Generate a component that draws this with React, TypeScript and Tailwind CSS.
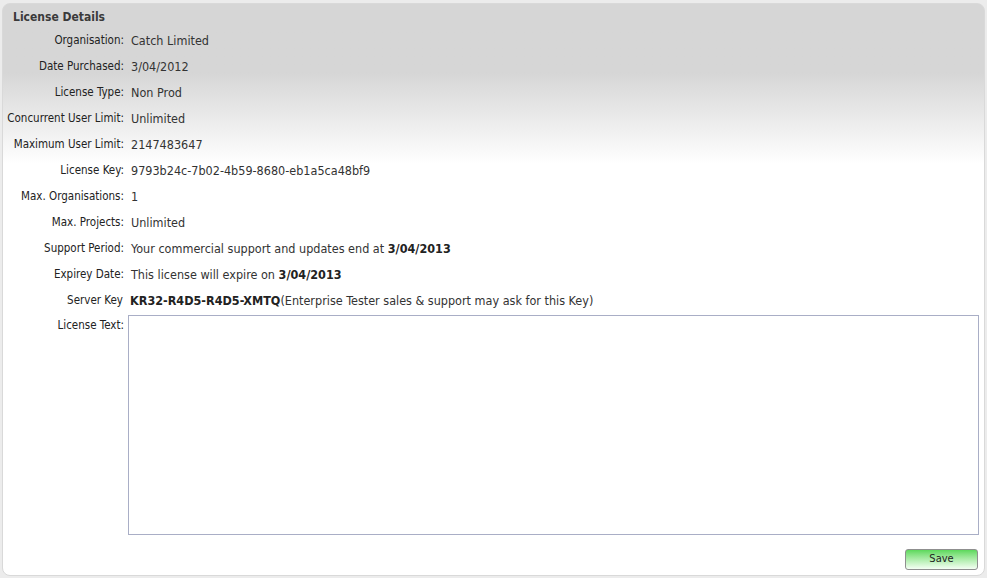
const rows: { label: string; value: React.ReactNode }[] = [
  { label: 'Organisation:', value: 'Catch Limited' },
  { label: 'Date Purchased:', value: '3/04/2012' },
  { label: 'License Type:', value: 'Non Prod' },
  { label: 'Concurrent User Limit:', value: 'Unlimited' },
  { label: 'Maximum User Limit:', value: '2147483647' },
  { label: 'License Key:', value: '9793b24c-7b02-4b59-8680-eb1a5ca48bf9' },
  { label: 'Max. Organisations:', value: '1' },
  { label: 'Max. Projects:', value: 'Unlimited' },
  {
    label: 'Support Period:',
    value: (
      <>
        Your commercial support and updates end at <b className="text-[#222]">3/04/2013</b>
      </>
    ),
  },
  {
    label: 'Expirey Date:',
    value: (
      <>
        This license will expire on <b className="text-[#222]">3/04/2013</b>
      </>
    ),
  },
];

export default function App() {
  return (
    <div
      className="w-[987px] h-[578px] bg-[#ececec] p-[2px] pt-[3px] text-[#333]"
      style={{ fontFamily: '"DejaVu Sans Condensed", "DejaVu Sans", sans-serif' }}
    >
      <div className="h-full rounded-lg border border-[#d9d9d9] bg-gradient-to-b from-[#d6d6d6] from-[12%] to-white to-[28%] flex flex-col">
        <h2 className="text-[12px] font-bold text-[#3a3a3a] pl-[10px] pt-[4px] h-[24px]">License Details</h2>

        <div className="flex flex-col">
          {rows.map((r) => (
            <div key={r.label} className="flex items-center h-[26px]">
              <div className="w-[121px] text-right text-[11.5px] text-[#222] shrink-0">{r.label}</div>
              <div className="pl-[7px] text-[12.5px] text-[#333]">{r.value}</div>
            </div>
          ))}
          <div className="flex items-center h-[26px]">
            <div className="w-[120px] text-right text-[11.5px] text-[#222] shrink-0">Server Key</div>
            <div className="pl-[7px] text-[12.5px] text-[#333]">
              <b className="text-[#222]">KR32-R4D5-R4D5-XMTQ</b>(Enterprise Tester sales &amp; support may ask for this Key)
            </div>
          </div>
          <div className="flex mt-[1px]">
            <div className="w-[121px] text-right text-[11.5px] text-[#222] shrink-0 pt-[2px]">License Text:</div>
            <textarea className="ml-[4px] w-[851px] h-[220px] border border-[#a9aec6] bg-white resize-none outline-none" />
          </div>
        </div>

        <div className="flex justify-end pr-[6px] mt-[14px]">
          <button
            className="w-[73px] h-[21px] rounded-[3px] border border-[#8f8f8f] bg-gradient-to-b from-[#5bd85b] to-[#f4fff4] text-[11px] text-[#222]"
          >
            Save
          </button>
        </div>
      </div>
    </div>
  );
}
